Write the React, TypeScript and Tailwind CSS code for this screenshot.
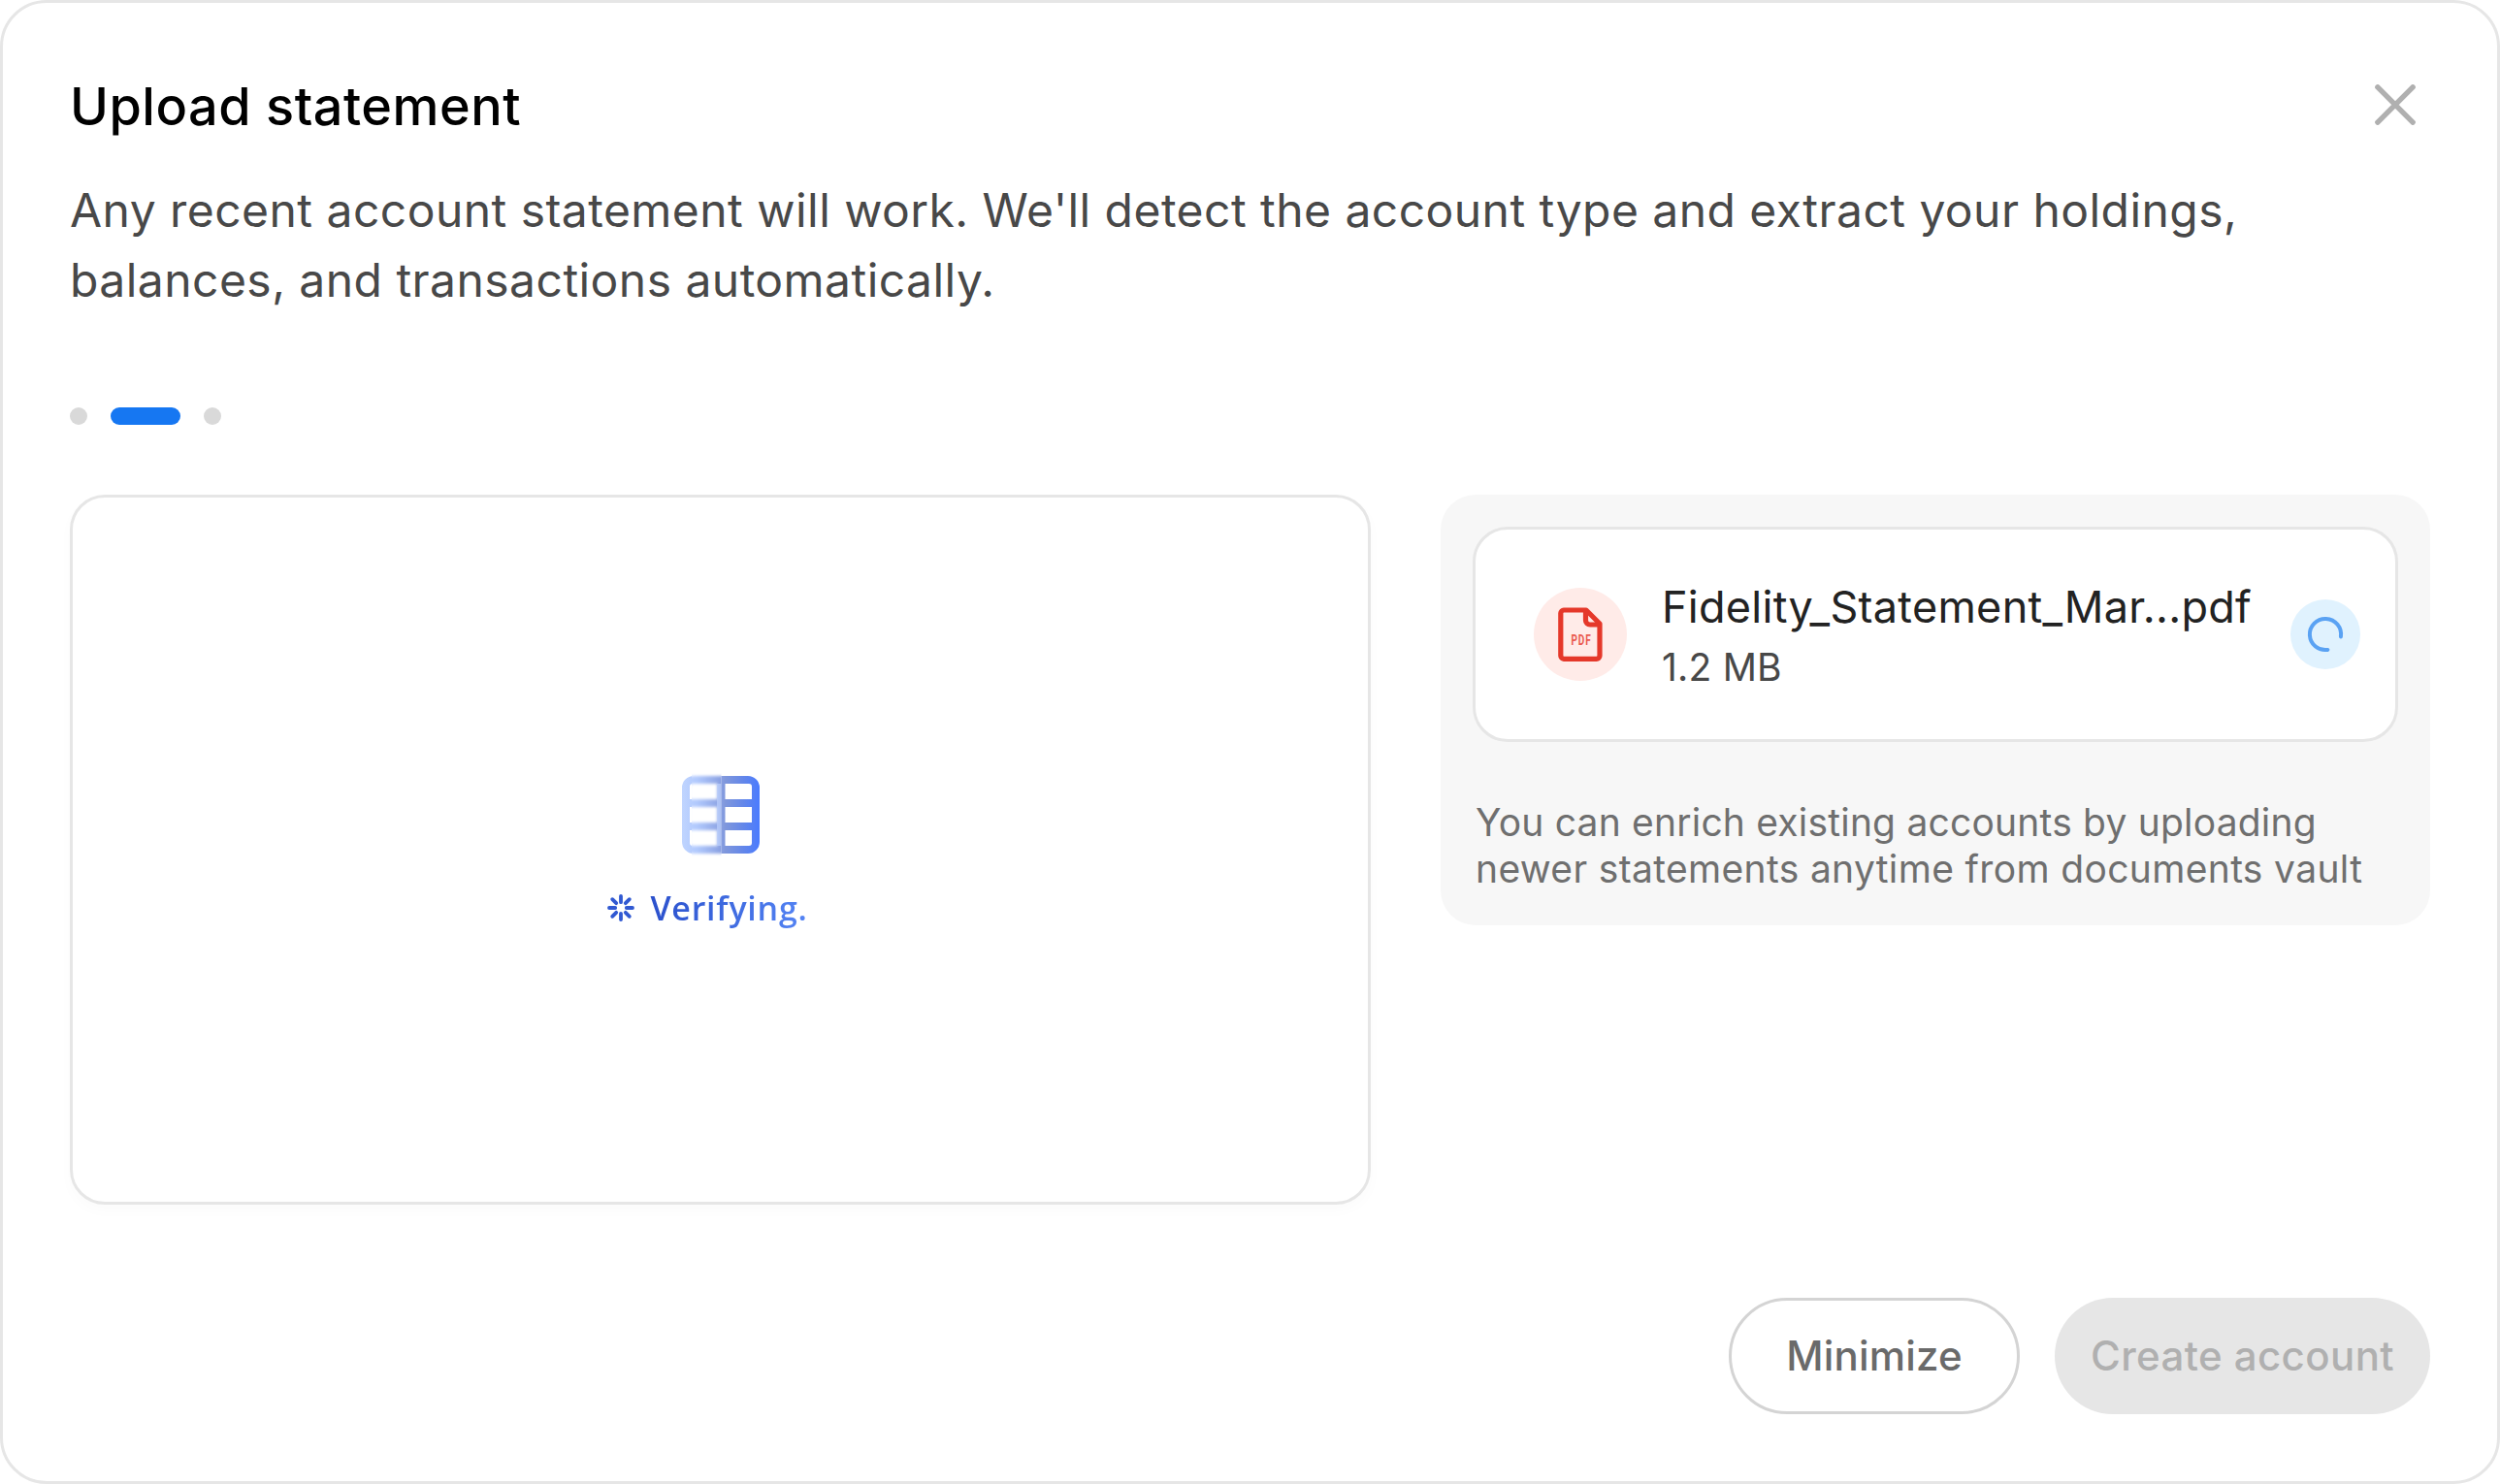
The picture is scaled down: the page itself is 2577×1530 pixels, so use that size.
import React from 'react';

const STEPS = ['select', 'upload', 'review'];
const ACTIVE_STEP = 'upload';

const TABLE_PATH =
  'M12 0h56a12 12 0 0 1 12 12v56a12 12 0 0 1-12 12H12A12 12 0 0 1 0 68V12A12 12 0 0 1 12 0ZM11 8a3 3 0 0 0-3 3v13h28.500V8ZM44.500 8v16H72V11a3 3 0 0 0-3-3ZM8 32v16h28.500V32ZM44.500 32v16H72V32ZM8 56v13a3 3 0 0 0 3 3h25.500V56ZM44.500 56v16H69a3 3 0 0 0 3-3V56Z';

const CloseIcon: React.FC = () => (
  <svg className="size-[42px]" viewBox="0 0 42 42" fill="none" stroke="#b0b0b0" strokeWidth="5.5" strokeLinecap="round">
    <path d="M2.9 2.9 39.1 39.1M39.1 2.9 2.9 39.1" />
  </svg>
);

const PdfIcon: React.FC = () => (
  <svg className="h-[56px] w-[46px]" viewBox="0 0 46 56" fill="none" stroke="#e5382a" strokeWidth="5.2" strokeLinejoin="round">
    <path d="M6 3h23l14 14v33a3.4 3.4 0 0 1-3.4 3.4H6A3.4 3.4 0 0 1 2.8 50V6.2A3.4 3.4 0 0 1 6 3Z" />
    <path d="M28.5 3v10.500a4.500 4.500 0 0 0 4.500 4.500h10" />
    <text x="13.5" y="38.5" textLength="21" lengthAdjust="spacingAndGlyphs" fill="#ea5a4e" stroke="none" fontFamily="Roboto, sans-serif" fontSize="14" fontWeight="700" letterSpacing="1.2">PDF</text>
  </svg>
);

const SpinnerIcon: React.FC = () => (
  <svg className="size-[40px]" viewBox="0 0 40 40" fill="none" stroke="#5aa2f3" strokeWidth="4" strokeLinecap="round">
    <path d="M35.9 22.4A16.1 16.1 0 1 0 22.4 35.9" />
  </svg>
);

const TableIcon: React.FC = () => (
  <svg className="size-[80px] overflow-visible" viewBox="0 0 80 80" fill="none">
    <defs>
      <linearGradient id="table" x1="0" y1="0" x2="80" y2="0" gradientUnits="userSpaceOnUse">
        <stop stopColor="#c0d5ff" />
        <stop offset=".2" stopColor="#b0c8fd" />
        <stop offset=".4" stopColor="#97aeeb" />
        <stop offset=".56" stopColor="#7f97dc" />
        <stop offset=".8" stopColor="#6286ea" />
        <stop offset="1" stopColor="#4a7bff" />
      </linearGradient>
      <clipPath id="sharp">
        <path d="M-4-4H10V84H-4ZM40.500-4H84V84H40.500Z" />
      </clipPath>
      <clipPath id="soft">
        <path d="M10-4H40.500V84H10Z" />
      </clipPath>
      <filter id="blur" x="-10%" y="-10%" width="120%" height="120%">
        <feGaussianBlur stdDeviation="1.6" />
      </filter>
    </defs>
    <g clipPath="url(#sharp)">
      <path fill="url(#table)" fillRule="evenodd" d={TABLE_PATH} />
    </g>
    {/* shimmer passing over the left column */}
    <g clipPath="url(#soft)">
      <path fill="url(#table)" fillRule="evenodd" d={TABLE_PATH} filter="url(#blur)" />
      <path d="M36 8h4.500v64H36Z" fill="#b9cdfb" fillOpacity=".75" />
    </g>
  </svg>
);

const SparkIcon: React.FC = () => (
  <svg className="size-[28px]" viewBox="0 0 28 28" fill="none" stroke="#3159d2" strokeWidth="3.8" strokeLinecap="round">
    <path d="M14 2v6.200M14 19.800V26M2 14h6.200M19.800 14H26M5.200 5.200l4 4M18.800 18.800l4 4M22.800 5.200l-4 4M9.200 18.800l-4 4" />
  </svg>
);

const StepDots: React.FC = () => (
  <div className="mt-[95px] flex h-[18px] items-center gap-6">
    {STEPS.map((step) => (
      <span
        key={step}
        className={step === ACTIVE_STEP ? 'h-[18px] w-[72px] rounded-full bg-[#1677f2]' : 'size-[18px] rounded-full bg-[#d9d9d9]'}
      />
    ))}
  </div>
);

const FileCard: React.FC = () => (
  <div className="flex h-[222px] items-center rounded-[36px] border-[3px] border-[#e6e6e6] bg-white pl-[60px] pr-[36px]">
    <div className="flex size-24 shrink-0 items-center justify-center rounded-full bg-[#ffebe8]">
      <PdfIcon />
    </div>
    <div className="ml-9 flex-1 whitespace-nowrap">
      <div className="text-[45px] leading-[66px] tracking-[0.28px] text-[#222222]">Fidelity_Statement_Mar...pdf</div>
      <div className="text-[39px] leading-[57px] tracking-[0.2px] text-[#484848]">1.2 MB</div>
    </div>
    <div className="flex size-[72px] shrink-0 items-center justify-center rounded-full bg-[#e0f2fe]">
      <SpinnerIcon />
    </div>
  </div>
);

export default function App() {
  return (
    <div className="flex h-[1530px] w-[2577px] flex-col rounded-[48px] border-[3px] border-[#e6e6e6] bg-white px-[69px] pt-[66px] pb-[69px] font-['Inter',sans-serif]">
      <div className="flex h-[81px] items-center justify-between pr-[15px]">
        <h1 className="text-[54px] leading-[81px] font-medium tracking-[0.5px] text-black">Upload statement</h1>
        <button type="button" aria-label="Close" className="mb-[3px]">
          <CloseIcon />
        </button>
      </div>
      <p className="mt-[31px] text-[48px] leading-[72px] tracking-[0.455px] whitespace-nowrap text-[#484848]">
        Any recent account statement will work. We'll detect the account type and extract your holdings,
        <br />
        balances, and transactions automatically.
      </p>

      <StepDots />

      <div className="mt-[72px] flex items-start gap-[72px]">
        <div className="flex h-[732px] w-[1341px] flex-col items-center rounded-[36px] border-[3px] border-[#e6e6e6] pt-[287px] shadow-[0_6px_15px_rgba(0,0,0,0.02)]">
          <TableIcon />
          <div className="mt-[29px] flex h-[54px] items-center gap-[16px] pr-[26px]">
            <SparkIcon />
            <span className="bg-linear-to-r from-[#2b50cc] to-[#5585f5] bg-clip-text font-['Open_Sans',sans-serif] text-[34px] leading-[54px] font-semibold tracking-[0.75px] text-transparent">
              Verifying.
            </span>
          </div>
        </div>

        <div className="h-[444px] w-[1020px] rounded-[36px] bg-[#f7f7f7] px-[33px] pt-[33px]">
          <FileCard />
          <p className="mt-[59px] ml-[3px] text-[39px] leading-[48px] tracking-[0.34px] whitespace-nowrap text-[#6f6f6f]">
            <span className="tracking-[0.2px]">You can enrich existing accounts by uploading</span>
            <br />
            newer statements anytime from documents vault
          </p>
        </div>
      </div>

      <div className="mt-auto flex justify-end gap-9">
        <button type="button" className="h-[120px] w-[300px] rounded-full border-[3px] border-[#d4d4d4] pb-[2px] text-[42px] font-medium tracking-[0.2px] text-[#6a6a6a]">
          Minimize
        </button>
        <button type="button" disabled className="h-[120px] w-[387px] rounded-full bg-[#e6e6e6] pb-[2px] text-[42px] font-medium tracking-[0.4px] whitespace-nowrap text-[#b0b0b0]">
          Create account
        </button>
      </div>
    </div>
  );
}
